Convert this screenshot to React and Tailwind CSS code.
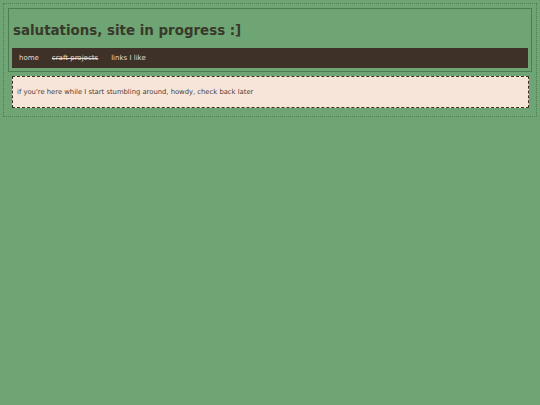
import React from 'react';

export default function App() {
    return (
        <div className="min-h-[405px] bg-[#6fa574] pt-[3px] px-[3px] font-['DejaVu_Sans',Verdana,sans-serif]">
            <div className="border border-dotted border-[#4f7d53] p-[4px]">
                <header className="border border-[#4f7d53] px-[3px] pt-[12px] pb-[3px]">
                    <h1 className="text-[13.4px] leading-[20px] font-bold text-[#38392a] pl-[1px]">
                        salutations, site in progress :]
                    </h1>
                    <nav className="mt-[7px] h-[20px] bg-[#3d3128] flex items-center gap-[13px] px-[7px] text-[7px]">
                        <a href="#" className="text-[#e6d8cc]">home</a>
                        <a href="#" className="text-[#e6d8cc] line-through">craft projects</a>
                        <a href="#" className="text-[#e6d8cc]">links I like</a>
                    </nav>
                </header>
                <main className="mt-[4px] ml-[4px] mr-[3px] mb-[4px] h-[32px] border border-dashed border-[#3d3128] bg-[#f8e5da] flex items-center px-[4px] text-[6.8px] text-[#4a3f38]">
                    <p>if you're here while I start stumbling around, howdy, check back later</p>
                </main>
            </div>
        </div>
    );
}
